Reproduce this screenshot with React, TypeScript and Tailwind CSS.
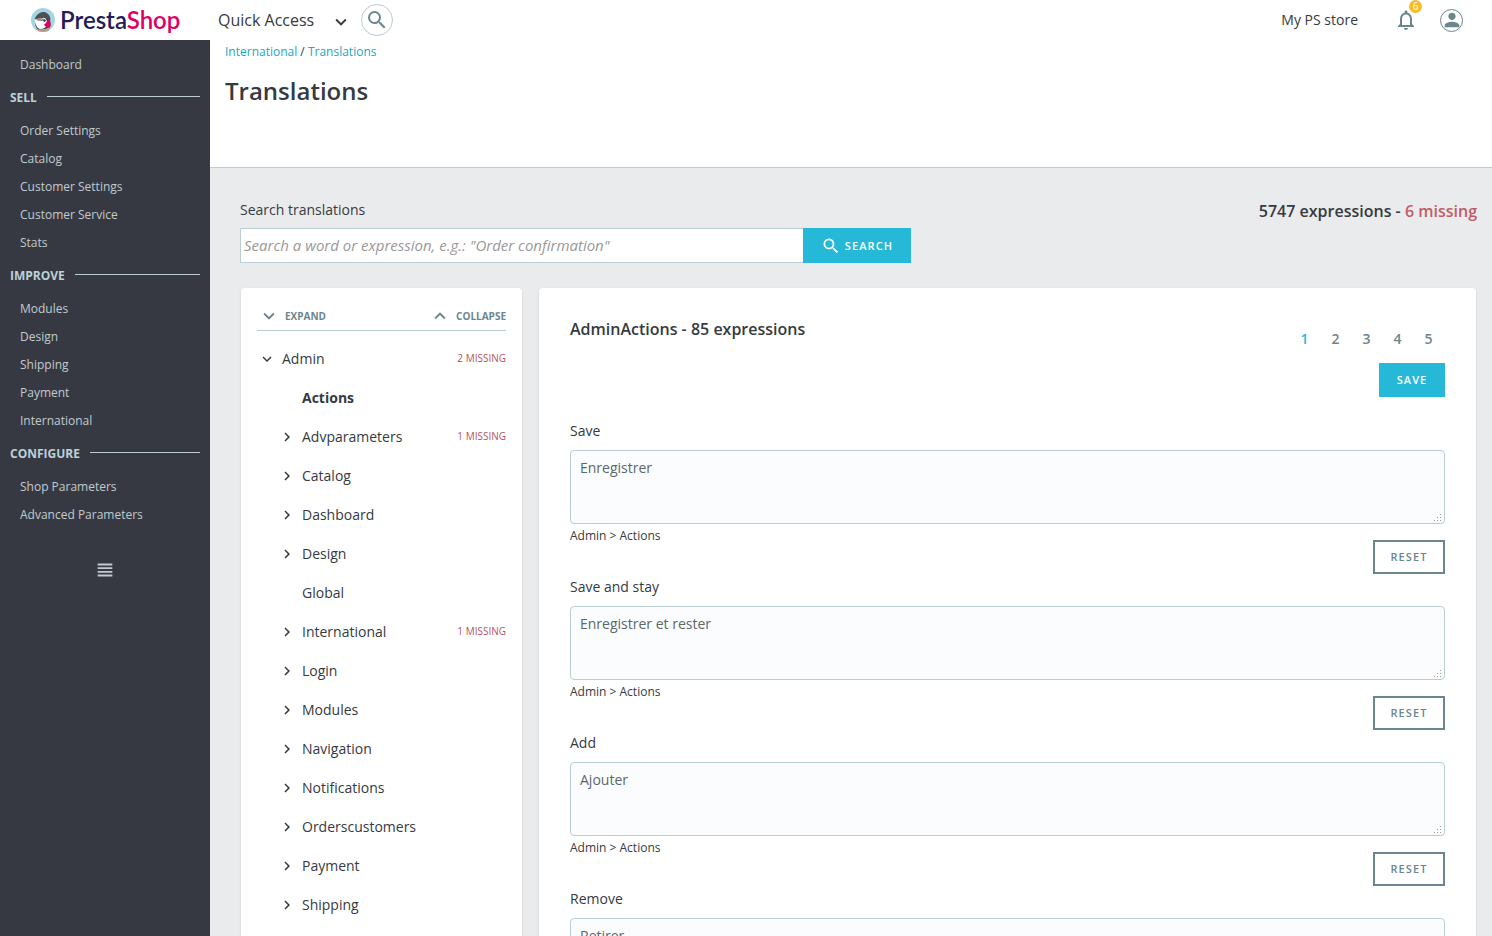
import React from 'react';
import {
  MdChevronRight,
  MdExpandLess,
  MdExpandMore,
  MdNotificationsNone,
  MdPerson,
  MdSearch,
  MdViewHeadline,
} from 'react-icons/md';

const menu = [
  {
    title: 'SELL',
    items: ['Order Settings', 'Catalog', 'Customer Settings', 'Customer Service', 'Stats'],
  },
  {
    title: 'IMPROVE',
    items: ['Modules', 'Design', 'Shipping', 'Payment', 'International'],
  },
  {
    title: 'CONFIGURE',
    items: ['Shop Parameters', 'Advanced Parameters'],
  },
];

interface Domain {
  name: string;
  leaf?: boolean;
  active?: boolean;
  missing?: number;
}

const domains: Domain[] = [
  { name: 'Actions', leaf: true, active: true },
  { name: 'Advparameters', missing: 1 },
  { name: 'Catalog' },
  { name: 'Dashboard' },
  { name: 'Design' },
  { name: 'Global', leaf: true },
  { name: 'International', missing: 1 },
  { name: 'Login' },
  { name: 'Modules' },
  { name: 'Navigation' },
  { name: 'Notifications' },
  { name: 'Orderscustomers' },
  { name: 'Payment' },
  { name: 'Shipping' },
];

const expressions = [
  { id: 'save', label: 'Save', value: 'Enregistrer' },
  { id: 'save-and-stay', label: 'Save and stay', value: 'Enregistrer et rester' },
  { id: 'add', label: 'Add', value: 'Ajouter' },
  { id: 'remove', label: 'Remove', value: 'Retirer' },
];

const Logo: React.FC = () => (
  <a href="#" className="flex w-[210px] items-center gap-[5px] pl-[31px]">
    <svg viewBox="0 0 24 24" className="h-6 w-6" aria-hidden="true">
      <clipPath id="logo-clip">
        <circle cx="12" cy="12" r="12" />
      </clipPath>
      <g clipPath="url(#logo-clip)">
        <rect width="24" height="24" fill="#a4d5e3" />
        <path d="M6 9 H18 C20 13 20 20 17 22 H8 C3 19 3 12 6 9 Z" fill="#48484b" />
        <path d="M3.500 11 C4 12.500 4 17 7 20 C10 22 14 20.500 15.500 17.500 C16.500 15 16 11.500 14 10 Z" fill="#fff" />
        <path d="M3.500 11.500 C5 6.500 9 4 13 4 C17 4.500 19.500 8 19.500 12 C15.500 8.500 9 9 3.500 11.500 Z" fill="#4f5254" />
        <path d="M5 11.500 C8 9.500 12 10 14 12.500 C11 13 7 13.500 5 11.500 Z" fill="#8d8f91" />
        <circle cx="13.500" cy="12.500" r="1.200" fill="#333" />
        <path d="M16.500 11.500 C18.500 12 20.500 15 19.500 18.500 C17 19.500 13.500 18.500 13 16.500 C15 15.500 16 14 16.500 11.500 Z" fill="#df0067" />
        <path d="M4 20.500 C8 22 14 21.500 18 19.500 V24 H4 Z" fill="#b3a092" />
      </g>
    </svg>
    <span className="font-[Lato,sans-serif] text-2xl leading-6 font-semibold text-[#251b5b]">
      Presta<span className="text-[#df0067]">Shop</span>
    </span>
  </a>
);

const Header: React.FC = () => (
  <header className="flex h-10 shrink-0 items-center bg-white">
    <Logo />
    <button type="button" className="ml-2 flex items-center gap-4">
      <span className="text-base">Quick Access</span>
      <MdExpandMore className="mt-1 h-[22px] w-[22px]" stroke="currentColor" />
    </button>
    <button
      type="button"
      aria-label="Search"
      className="ml-[9px] flex h-8 w-8 items-center justify-center rounded-full border border-[#bbcdd2]"
    >
      <MdSearch className="h-6 w-6 text-[#6c868e]" />
    </button>
    <a href="#" className="ml-auto">My PS store</a>
    <button type="button" aria-label="Notifications" className="relative ml-9 text-[#6c868e]">
      <MdNotificationsNone className="h-6 w-6" />
      <span className="absolute -top-2 left-[15px] h-[13px] w-[13px] rounded-full bg-[#fbbb22] text-center text-[10px] leading-[13px] text-white">
        6
      </span>
    </button>
    <button
      type="button"
      aria-label="Profile"
      className="mr-[29px] ml-[22px] flex h-[23px] w-[23px] items-center justify-center overflow-hidden rounded-full border border-[#6c868e] text-[#6c868e]"
    >
      <MdPerson className="h-[22px] w-[22px] shrink-0" />
    </button>
  </header>
);

const Sidebar: React.FC = () => (
  <nav className="w-[210px] shrink-0 bg-[#373942] px-[10px] pt-[11px] text-xs text-[#c0cbd0]">
    <a href="#" className="block pl-[10px] leading-7">Dashboard</a>
    {menu.map((section) => (
      <div key={section.title}>
        <div className="flex h-[38px] items-center gap-[10px]">
          <h2 className="font-bold text-[#bbd2d8]">{section.title}</h2>
          <span className="mb-[3px] h-px flex-1 bg-[#bbcdd2]" />
        </div>
        <ul>
          {section.items.map((item) => (
            <li key={item}>
              <a href="#" className="block pl-[10px] leading-7">{item}</a>
            </li>
          ))}
        </ul>
      </div>
    ))}
    <button type="button" aria-label="Toggle menu" className="mx-auto mt-[30px] block">
      <MdViewHeadline className="h-[22px] w-[22px]" />
    </button>
  </nav>
);

const DomainTree: React.FC = () => (
  <aside className="w-[281px] shrink-0 rounded-[4px] bg-white px-4 pt-4 shadow-sm">
    <div className="flex h-[27px] items-start justify-between border-b border-[#bbcdd2] text-[10px] leading-6 font-bold text-[#6c868e]">
      <button type="button" className="flex items-center gap-[5px] pl-px">
        <MdExpandMore className="h-[22px] w-[22px]" stroke="currentColor" />
        EXPAND
      </button>
      <button type="button" className="flex items-center gap-[5px]">
        <MdExpandLess className="h-[22px] w-[22px]" stroke="currentColor" />
        COLLAPSE
      </button>
    </div>
    <ul className="pt-2">
      <li>
        <div className="flex h-[39px] items-center">
          <button type="button" className="flex items-center gap-[6px] pl-px">
            <MdExpandMore className="h-[18px] w-[18px]" stroke="currentColor" />
            Admin
          </button>
          <span className="ml-auto text-[10px] text-[#b9525f]">2 MISSING</span>
        </div>
        <ul>
          {domains.map((domain) => (
            <li key={domain.name} className="flex h-[39px] items-center pl-[21px]">
              <button type="button" className="flex items-center gap-[6px]">
                {domain.leaf ? (
                  <span className="w-[18px]" />
                ) : (
                  <MdChevronRight className="h-[18px] w-[18px]" stroke="currentColor" />
                )}
                <span className={domain.active ? 'font-bold' : ''}>{domain.name}</span>
              </button>
              {domain.missing && (
                <span className="ml-auto text-[10px] text-[#b9525f]">{domain.missing} MISSING</span>
              )}
            </li>
          ))}
        </ul>
      </li>
    </ul>
  </aside>
);

const ResizeGrip: React.FC = () => (
  <svg viewBox="0 0 9 9" className="pointer-events-none absolute right-[3px] bottom-[2px] h-[9px] w-[9px]" fill="#999" aria-hidden="true">
    <path d="M7 1h1v1H7zM4 4h1v1H4zM7 4h1v1H7zM1 7h1v1H1zM4 7h1v1H4zM7 7h1v1H7z" />
  </svg>
);

const TranslationForm: React.FC = () => (
  <form className="min-w-0 flex-1 rounded-[4px] bg-white px-[31px] pt-[30px] shadow-sm">
    <div className="flex items-start justify-between">
      <h2 className="text-base leading-[22px] font-semibold">AdminActions - 85 expressions</h2>
      <ul className="flex pt-[11px] pr-px font-semibold text-[#6c868e]">
        {[1, 2, 3, 4, 5].map((page) => (
          <li key={page}>
            <a
              href="#"
              className={`block w-[31px] text-center leading-5 ${page === 1 ? 'text-[#25b9d7]' : ''}`}
            >
              {page}
            </a>
          </li>
        ))}
      </ul>
    </div>
    <div className="mt-[14px] mb-[22px] flex justify-end">
      <button type="submit" className="h-[34px] w-[66px] bg-[#25b9d7] text-[11px] font-semibold tracking-widest text-white">
        SAVE
      </button>
    </div>
    {expressions.map((expression) => (
      <div key={expression.id} className="mb-px">
        <label htmlFor={expression.id} className="mb-[7px] block leading-6">
          {expression.label}
        </label>
        <div className="relative">
          <textarea
            id={expression.id}
            defaultValue={expression.value}
            className="block h-[74px] w-full resize-none rounded-[4px] border border-[#bbcdd2] bg-[#fafcfe] px-[9px] py-[7px] leading-5 text-[#5c676b]"
          />
          <ResizeGrip />
        </div>
        <div className="flex items-start justify-between">
          <small className="pt-1 text-xs">Admin &gt; Actions</small>
          <button
            type="button"
            className="mt-4 h-[34px] w-[72px] border-2 border-[#6c868e] text-[11px] font-semibold tracking-widest text-[#6c868e]"
          >
            RESET
          </button>
        </div>
      </div>
    ))}
  </form>
);

const App: React.FC = () => {
  return (
    <div className="flex h-screen flex-col bg-[#eaebed] font-['Open_Sans',sans-serif] text-sm text-[#363a41]">
      <Header />
      <div className="flex min-h-0 flex-1">
        <Sidebar />
        <main className="min-w-0 flex-1 overflow-y-auto [scrollbar-width:none]">
          {/* Page heading */}
          <div className="h-32 border-b border-[#bbcdd2] bg-white px-[15px] pt-1">
            <p className="text-xs">
              <a href="#" className="text-[#25a6be]">International</a> /{' '}
              <a href="#" className="text-[#25a6be]">Translations</a>
            </p>
            <h1 className="mt-[15px] text-2xl font-semibold">Translations</h1>
          </div>

          <div className="pt-8 pr-[15px] pl-[30px]">
            {/* Search */}
            <div className="flex items-start justify-between">
              <form className="w-[671px]">
                <label htmlFor="search" className="block leading-5">Search translations</label>
                <div className="mt-2 flex h-[35px]">
                  <input
                    id="search"
                    type="text"
                    placeholder='Search a word or expression, e.g.: "Order confirmation"'
                    className="min-w-0 flex-1 border border-r-0 border-[#bbcdd2] bg-white px-[3px] text-[15px] placeholder:text-[#999] placeholder:italic"
                  />
                  <button
                    type="submit"
                    className="flex w-[108px] items-center justify-center gap-1 bg-[#25b9d7] text-[11px] font-semibold tracking-widest text-white"
                  >
                    <MdSearch className="h-5 w-5" />
                    SEARCH
                  </button>
                </div>
              </form>
              <p className="text-base leading-[22px] font-semibold">
                5747 expressions - <span className="text-[#c05c67]">6 missing</span>
              </p>
            </div>

            <div className="mt-[25px] flex gap-[17px] px-px">
              <DomainTree />
              <TranslationForm />
            </div>
          </div>
        </main>
      </div>
    </div>
  );
};

export default App;
